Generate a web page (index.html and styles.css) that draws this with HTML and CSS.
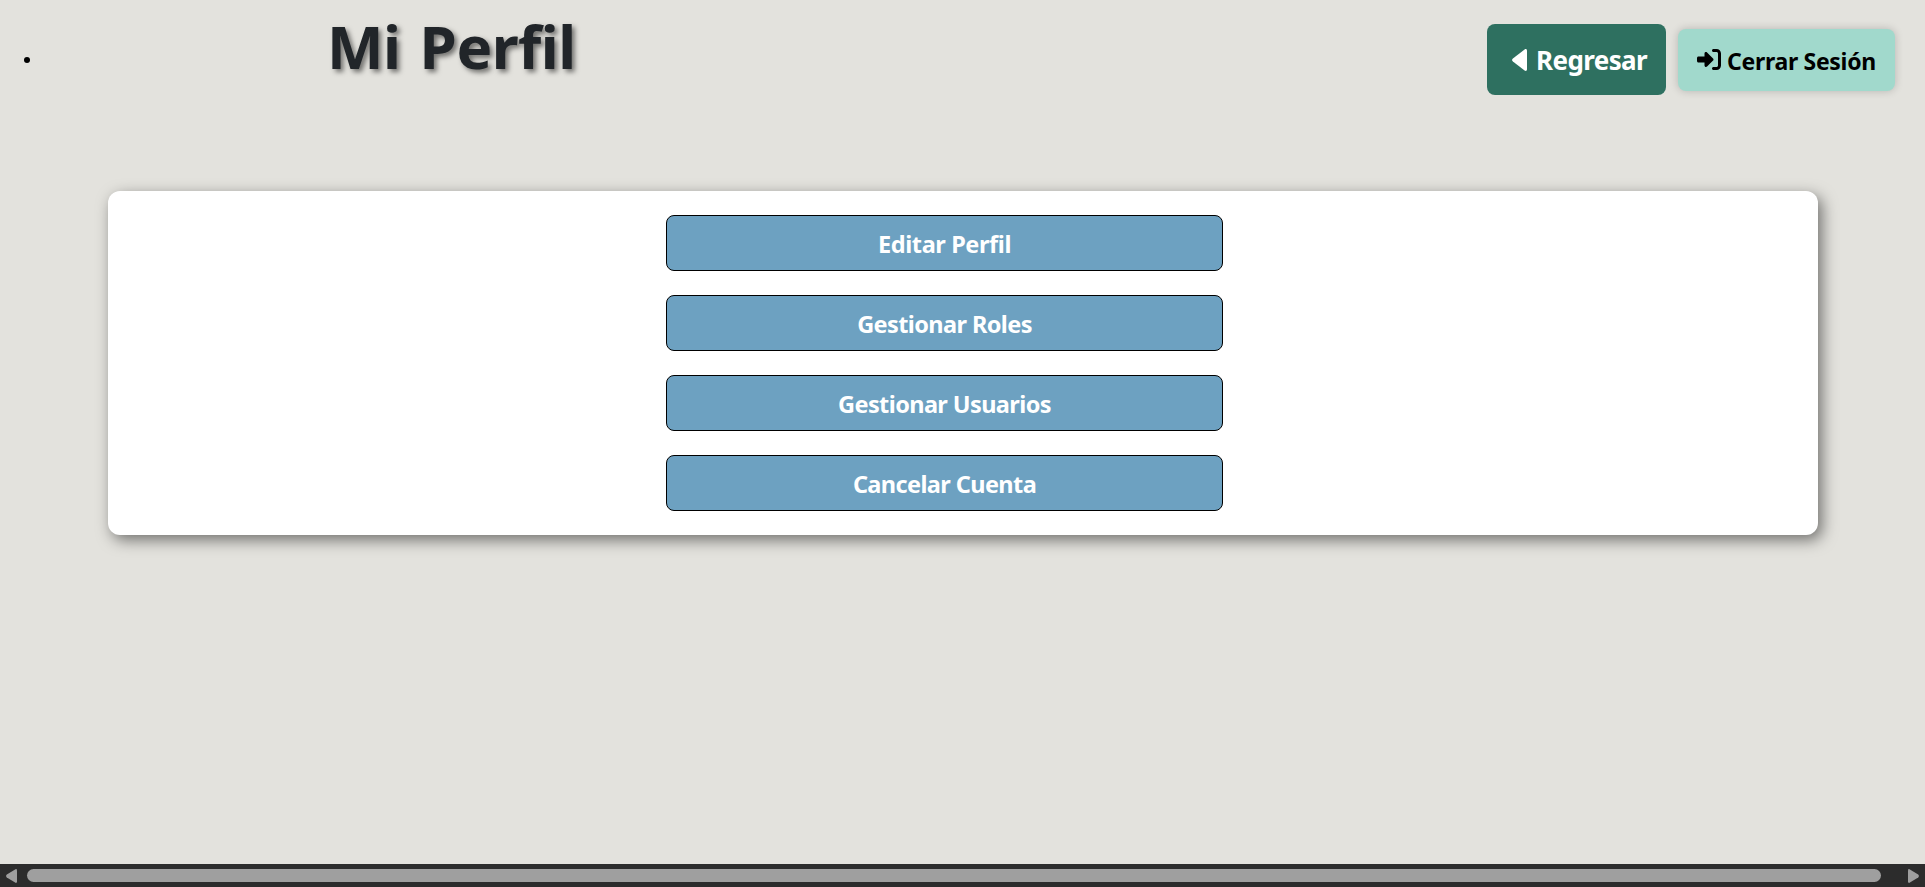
FILE: index.html
```html
<!DOCTYPE html>
<html lang="es">
<head>
<meta charset="utf-8">
<title>Mi Perfil</title>
<link rel="stylesheet" href="styles.css">
</head>
<body>
<div class="page">
  <header class="header">
    <span class="bullet"></span>
    <h1 class="title">Mi Perfil</h1>
    <nav class="actions">
      <a class="back">
        <svg class="back-icon" viewBox="0 0 15 22"><path d="M12.600.5C13.900-.4 15 .4 15 1.800V20.200C15 21.600 13.900 22.400 12.600 21.500L.9 12.400C-.2 11.500-.2 10.500.9 9.600Z" fill="#fff"/></svg>
        <span class="back-label">Regresar</span>
      </a>
      <a class="logout">
        <svg class="logout-icon" viewBox="0 0 512 448"><path d="M352 0h64c53 0 96 43 96 96v256c0 53-43 96-96 96h-64c-17.700 0-32-14.300-32-32s14.300-32 32-32h64c17.700 0 32-14.300 32-32V96c0-17.700-14.300-32-32-32h-64c-17.700 0-32-14.300-32-32s14.300-32 32-32zM342.600 246.600l-128 128c-9.200 9.200-22.900 11.900-34.900 6.900S160 365 160 352v-64H32c-17.700 0-32-14.300-32-32v-64c0-17.700 14.300-32 32-32h128V96c0-12.900 7.800-24.600 19.800-29.600s25.700-2.200 34.900 6.900l128 128c12.500 12.500 12.500 32.800 0 45.300z"/></svg>
        <span class="logout-label">Cerrar Sesión</span>
      </a>
    </nav>
  </header>
  <main class="card">
    <a class="option edit">Editar Perfil</a>
    <a class="option roles">Gestionar Roles</a>
    <a class="option users">Gestionar Usuarios</a>
    <a class="option cancel">Cancelar Cuenta</a>
  </main>
  <div class="scrollbar">
    <svg class="arrow" viewBox="0 0 11 14"><path d="M9.500.2Q11-.2 11 1.500V12.500Q11 14.200 9.500 13.800L.8 8.500Q-.6 7 .8 5.500Z" fill="#9f9f9f"/></svg>
    <div class="thumb"></div>
    <svg class="arrow" viewBox="0 0 11 14"><path d="M1.500.2Q0-.2 0 1.500V12.500Q0 14.200 1.500 13.800L10.200 8.500Q11.600 7 10.200 5.500Z" fill="#9f9f9f"/></svg>
  </div>
</div>
</body>
</html>
```
FILE: styles.css
```css
* { box-sizing: border-box; }
body {
  margin: 0;
  background: #e3e2dd;
  font-family: "Noto Sans", "Open Sans", sans-serif;
  font-weight: 700;
}
.page { display: flex; flex-direction: column; height: 887px; overflow: hidden; }
.header { display: flex; align-items: flex-start; height: 191px; padding: 0 30px 0 24px; }
.bullet { width: 6px; height: 6px; margin-top: 57px; border-radius: 50%; background: #000; }
.title {
  margin: 5px 0 0 297px;
  font-size: 60px;
  line-height: 82px;
  letter-spacing: -.5px;
  word-spacing: 4px;
  white-space: nowrap;
  color: #212529;
  text-shadow: 3px 3px 5px rgba(0, 0, 0, .5);
}
.actions { display: flex; align-items: center; gap: 12px; margin: 24px 0 0 auto; }
.back, .logout { display: flex; align-items: center; white-space: nowrap; }
.back {
  width: 179px;
  height: 71px;
  padding-left: 25px;
  border-radius: 8px;
  background: #2e7060;
  color: #fff;
  font-size: 26px;
  letter-spacing: -.6px;
}
.back-icon { width: 15px; height: 22px; margin-right: 9px; }
.back-label { padding-top: 1px; }
.logout {
  width: 217px;
  height: 62px;
  padding-left: 19px;
  border-radius: 8px;
  background: #a1d9cc;
  color: #000;
  font-size: 23px;
  letter-spacing: -.3px;
  box-shadow: 0 0 8px rgba(0, 0, 0, .2);
}
.logout-icon { width: 24px; height: 21px; margin: 0 6px 0 0; }
.logout-label { padding-top: 2px; }
.card {
  display: flex;
  flex-direction: column;
  gap: 24px;
  width: 1710px;
  height: 344px;
  margin-left: 108px;
  padding: 24px 0 0 558px;
  border-radius: 12px;
  background: #fff;
  box-shadow: 4px 5px 15px rgba(0, 0, 0, .5);
}
.option {
  display: flex;
  align-items: center;
  justify-content: center;
  width: 557px;
  height: 56px;
  padding-top: 2px;
  border: 1px solid #000;
  border-radius: 8px;
  background: #6da1c1;
  color: #fff;
  font-size: 23.5px;
  letter-spacing: -.6px;
  white-space: nowrap;
}
.edit { letter-spacing: -.4px; }
.scrollbar {
  display: flex;
  align-items: center;
  height: 23px;
  margin-top: auto;
  padding: 0 6px;
  background: #2c2c2c;
}
.arrow { flex: none; width: 11px; height: 14px; }
.thumb { width: 1854px; height: 13px; margin: 0 27px 0 10px; border-radius: 7px; background: #9f9f9f; }
```
